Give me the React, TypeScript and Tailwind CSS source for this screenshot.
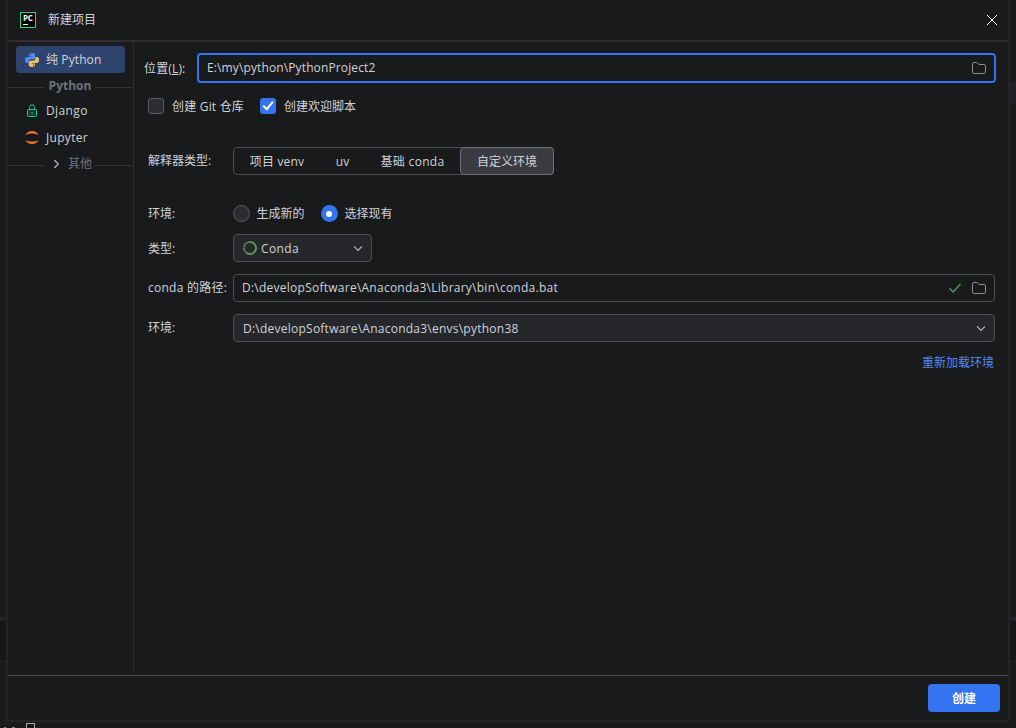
import { ReactNode, useState } from "react";
import clsx from "clsx";

const fieldClassName =
  "flex h-7 w-[762px] items-center rounded-[4px] border border-[#4b4d51]";
const labelClassName = "w-[85px] shrink-0 whitespace-nowrap";

const interpreterTypes = [
  { label: "项目 venv", width: "w-[86px]", tracking: "tracking-[0.15px]" },
  { label: "uv", width: "w-[45px]", tracking: "" },
  { label: "基础 conda", width: "w-[95px]", tracking: "tracking-[0.3px]" },
  { label: "自定义环境", width: "w-[94px]", tracking: "" },
];

function PyCharmLogo() {
  return (
    <span className="flex h-4 w-4 flex-col border border-[#21d789] bg-black pl-[2px] pt-px text-[8px] font-bold leading-[7px] tracking-[-0.3px] text-white">
      PC
      <span className="mt-[3px] h-px w-[5px] bg-white" />
    </span>
  );
}

function PythonIcon() {
  return (
    <svg width="16" height="16" viewBox="0 0 16 16" fill="none">
      <path
        d="M7.9 1C5.800 1 5 1.800 5 3v1.500h3.200V5H3.300C1.900 5 1 6.100 1 8s.9 3 2.200 3h1.300V9.400C4.500 8.100 5.500 7.300 6.800 7.300h2.700c1 0 1.700-.8 1.700-1.800V3c0-1.300-1.200-2-3.300-2Z"
        fill="#548af7"
      />
      <path
        d="M8.100 15c2.100 0 2.900-.8 2.900-2v-1.500H7.800V11h4.900c1.400 0 2.300-1.100 2.300-3s-.9-3-2.200-3h-1.300v1.600c0 1.300-1 2.100-2.300 2.100H6.500c-1 0-1.700.8-1.700 1.800V13c0 1.300 1.200 2 3.300 2Z"
        fill="#f2c55c"
      />
      <circle cx="6.500" cy="2.800" r=".7" fill="#2e436e" />
      <circle cx="9.500" cy="13.200" r=".7" fill="#2e436e" />
    </svg>
  );
}

function LockIcon() {
  return (
    <svg width="16" height="16" viewBox="0 0 16 16" fill="none" stroke="#20c99b">
      <rect x="3.500" y="6.500" width="9" height="7" rx="1" fill="#163a31" />
      <path d="M5.500 6.500V4.400a2.500 2.500 0 0 1 5 0v2.100M8 9v2.500" />
    </svg>
  );
}

function JupyterIcon() {
  return (
    <svg width="16" height="16" viewBox="0 0 16 16" fill="#f37626">
      <path d="M1.500 5C2.600 2.200 5.200.9 8 .9S13.400 2.200 14.500 5C12.900 3.900 10.700 3.400 8 3.400S3.100 3.900 1.500 5Z" />
      <path d="M1.500 10C2.600 12.800 5.200 14.100 8 14.100s5.400-1.300 6.500-4.100c-1.600 1.100-3.800 1.600-6.500 1.600S3.100 11.100 1.500 10Z" />
    </svg>
  );
}

function FolderIcon() {
  return (
    <svg width="16" height="16" viewBox="0 0 16 16" fill="none" stroke="#8c8e94">
      <path d="M1.500 3.900c0-.8.600-1.400 1.400-1.400h2.800c.4 0 .7.100.9.400L8 4.500h5.100c.8 0 1.400.6 1.400 1.400v6.200c0 .8-.6 1.400-1.400 1.400H2.900c-.8 0-1.400-.6-1.400-1.400V3.900Z" />
    </svg>
  );
}

function CondaIcon() {
  return (
    <svg width="16" height="16" viewBox="0 0 16 16" fill="none" stroke="#57965c">
      <path d="M8 2a6 6 0 1 1-3.500 10.900" strokeWidth="2" />
      <path d="M4.500 12.900A6 6 0 0 1 8 2" strokeWidth="2" strokeDasharray="1.500 .7" />
    </svg>
  );
}

function ChevronIcon() {
  return (
    <svg width="16" height="16" viewBox="0 0 16 16" fill="none" stroke="#b4b8bf">
      <path d="M4 6.300 8 10.300l4-4" strokeWidth="1.200" />
    </svg>
  );
}

function SidebarDivider({ children }: { children: ReactNode }) {
  return (
    <div className="flex items-center text-[#6f737a]">
      <span className="mt-1 h-px w-[37px] bg-[#313337]" />
      <span className="flex w-[50px] items-center justify-center whitespace-nowrap">
        {children}
      </span>
      <span className="mt-1 h-px flex-1 bg-[#313337]" />
    </div>
  );
}

function Checkbox({ label, defaultChecked = false }: { label: string; defaultChecked?: boolean }) {
  const [checked, setChecked] = useState(defaultChecked);

  return (
    <button
      type="button"
      role="checkbox"
      aria-checked={checked}
      className="flex items-center gap-2"
      onClick={() => setChecked(!checked)}
    >
      <span
        className={clsx(
          "flex h-4 w-4 items-center justify-center rounded-[3px]",
          checked ? "bg-[#3574f0]" : "border border-[#5a5d63] bg-[#2b2d30]"
        )}
      >
        {checked && (
          <svg width="16" height="16" viewBox="0 0 16 16" fill="none" stroke="#fff">
            <path d="m3.800 8.300 3 3 5.500-7" strokeWidth="2" strokeLinecap="round" />
          </svg>
        )}
      </span>
      <span className="pt-0.5">{label}</span>
    </button>
  );
}

interface RadioProps {
  label: string;
  checked: boolean;
  onSelect: () => void;
}

function Radio({ label, checked, onSelect }: RadioProps) {
  return (
    <button
      type="button"
      role="radio"
      aria-checked={checked}
      className="flex items-center gap-[7px]"
      onClick={onSelect}
    >
      <span
        className={clsx(
          "flex h-[17px] w-[17px] items-center justify-center rounded-full",
          checked ? "bg-[#3574f0]" : "border border-[#5a5d63] bg-[#2b2d30]"
        )}
      >
        {checked && <span className="h-[6px] w-[6px] rounded-full bg-white" />}
      </span>
      {label}
    </button>
  );
}

export default function App() {
  const [interpreter, setInterpreter] = useState("自定义环境");
  const [useExisting, setUseExisting] = useState(true);

  return (
    <div className="flex h-[728px] w-[1016px] flex-col overflow-hidden bg-[#191a1c] font-['Open_Sans','Noto_Sans_CJK_SC',sans-serif] text-[12px] leading-4 text-[#d1d3d9]">
      <div className="flex h-[722px]">
        <div className="flex w-[6px] flex-col">
          <div className="h-[617px]" />
          <div className="h-1 bg-[#242528]" />
          <div className="h-[41px] border-b border-[#242528] bg-[#151618]" />
        </div>

        <div className="flex w-[1004px] flex-col border-x-2 border-b-2 border-[#222325] bg-[#191a1c]">
          <header className="flex h-[42px] items-center border-b-2 border-[#2d2e31] pl-3 pr-2">
            <PyCharmLogo />
            <h1 className="ml-3">新建项目</h1>
            <button type="button" aria-label="关闭" className="ml-auto">
              <svg width="16" height="16" viewBox="0 0 16 16" fill="none" stroke="#fff">
                <path d="m3 3 10 10M13 3 3 13" />
              </svg>
            </button>
          </header>

          <div className="flex h-[633px]">
            <nav className="w-[126px] border-r border-[#2b2d30] pt-1">
              <div className="ml-2 flex h-[27px] w-[109px] items-center gap-[6px] rounded-[4px] bg-[#2e436e] pl-2">
                <PythonIcon />
                <span className="whitespace-nowrap tracking-[0.1px]">纯 Python</span>
              </div>
              <div className="flex h-[25px] items-center">
                <div className="flex-1 font-bold">
                  <SidebarDivider>Python</SidebarDivider>
                </div>
              </div>
              <div className="flex h-[26px] items-center gap-[6px] pl-4 tracking-[0.4px]">
                <LockIcon />
                Django
              </div>
              <div className="flex h-[27px] items-center gap-[6px] pl-4 tracking-[0.3px]">
                <JupyterIcon />
                Jupyter
              </div>
              <div className="flex h-[25px] items-center">
                <div className="flex-1">
                  <SidebarDivider>
                    <span className="-rotate-90">
                      <ChevronIcon />
                    </span>
                    <span className="ml-1">其他</span>
                  </SidebarDivider>
                </div>
              </div>
            </nav>

            <main className="flex-1 pt-[11px]">
              <div className="flex h-[30px] items-center pl-[10px]">
                <label className="w-[53px] whitespace-nowrap pt-0.5 tracking-[0.15px]">
                  位置(<u>L</u>):
                </label>
                <div className="flex h-[30px] w-[799px] items-center justify-between rounded-[4px] border-2 border-[#3574f0] pl-2 pr-[7px]">
                  <span className="tracking-[0.12px]">E:\my\python\PythonProject2</span>
                  <FolderIcon />
                </div>
              </div>

              <div className="mt-[15px] flex h-4 items-center pl-[14px]">
                <div className="w-[112px] whitespace-nowrap tracking-[0.2px]">
                  <Checkbox label="创建 Git 仓库" />
                </div>
                <Checkbox label="创建欢迎脚本" defaultChecked />
              </div>

              <div className="mt-[33px] flex items-center pl-[14px]">
                <span className={labelClassName}>解释器类型:</span>
                <div className="flex h-7 w-[321px] rounded-[4px] border border-[#4b4d51]">
                  {interpreterTypes.map(({ label, width, tracking }) => (
                    <button
                      key={label}
                      type="button"
                      className={clsx(
                        "-my-px h-7 shrink-0 whitespace-nowrap rounded-[4px] border pt-0.5",
                        width,
                        tracking,
                        interpreter === label
                          ? "border-[#6f7178] bg-[#393b40]"
                          : "border-transparent"
                      )}
                      onClick={() => setInterpreter(label)}
                    >
                      {label}
                    </button>
                  ))}
                </div>
              </div>

              <div className="mt-[30px] flex h-[17px] items-center pl-[14px]">
                <span className={labelClassName}>环境:</span>
                <div className="-ml-px flex">
                  <div className="w-[88px] pl-[0.5px]">
                    <Radio
                      label="生成新的"
                      checked={!useExisting}
                      onSelect={() => setUseExisting(false)}
                    />
                  </div>
                  <div className="pl-[0.5px]">
                    <Radio
                      label="选择现有"
                      checked={useExisting}
                      onSelect={() => setUseExisting(true)}
                    />
                  </div>
                </div>
              </div>

              <div className="mt-3 flex items-center pl-[14px]">
                <span className={clsx(labelClassName, "pt-0.5")}>类型:</span>
                <div className="flex h-7 w-[139px] items-center rounded-[4px] border border-[#4b4d51] bg-[#26272b] pl-2 pr-[5px]">
                  <CondaIcon />
                  <span className="ml-[3px] mr-auto pt-0.5 tracking-[0.4px]">Conda</span>
                  <ChevronIcon />
                </div>
              </div>

              <div className="mt-3 flex items-center pl-[14px]">
                <span className={clsx(labelClassName, "tracking-[0.25px]")}>conda 的路径:</span>
                <div className={clsx(fieldClassName, "gap-2 pl-2 pr-[7px]")}>
                  <span className="mr-auto tracking-[0.25px]">
                    D:\developSoftware\Anaconda3\Library\bin\conda.bat
                  </span>
                  <svg width="16" height="16" viewBox="0 0 16 16" fill="none" stroke="#57965c">
                    <path d="m2.500 8.300 3.700 3.700 7.300-8" strokeWidth="1.500" />
                  </svg>
                  <FolderIcon />
                </div>
              </div>

              <div className="mt-3 flex items-center pl-[14px]">
                <span className={labelClassName}>环境:</span>
                <div className={clsx(fieldClassName, "justify-between bg-[#26272b] pl-[9px] pr-[5px]")}>
                  <span className="pt-0.5 tracking-[0.24px]">
                    D:\developSoftware\Anaconda3\envs\python38
                  </span>
                  <ChevronIcon />
                </div>
              </div>

              <div className="mt-[13px] flex justify-end pr-[14px] text-[#548af7]">
                <button type="button">重新加载环境</button>
              </div>
            </main>
          </div>

          <footer className="flex flex-1 items-start justify-end border-t border-[#4b4d51] pr-2 pt-2">
            <button
              type="button"
              className="h-7 w-[72px] rounded-[4px] bg-[#3574f0] pt-0.5 font-bold text-white"
            >
              创建
            </button>
          </footer>
        </div>

        <div className="flex w-[6px] flex-col">
          <div className="h-[82px]" />
          <div className="h-[22px] bg-[#202126]" />
          <div className="h-[513px]" />
          <div className="h-1 bg-[#242528]" />
          <div className="h-[41px] border-b border-[#242528] bg-[#151618]" />
        </div>
      </div>

      <div className="flex h-[6px] items-end">
        <span className="ml-1 h-px w-[2px] bg-[#8c8e94]" />
        <span className="ml-[6px] h-px w-[3px] bg-[#8c8e94]" />
        <span className="ml-[11px] h-[5px] w-[9px] border border-b-0 border-[#a6a8ad]" />
      </div>
    </div>
  );
}
